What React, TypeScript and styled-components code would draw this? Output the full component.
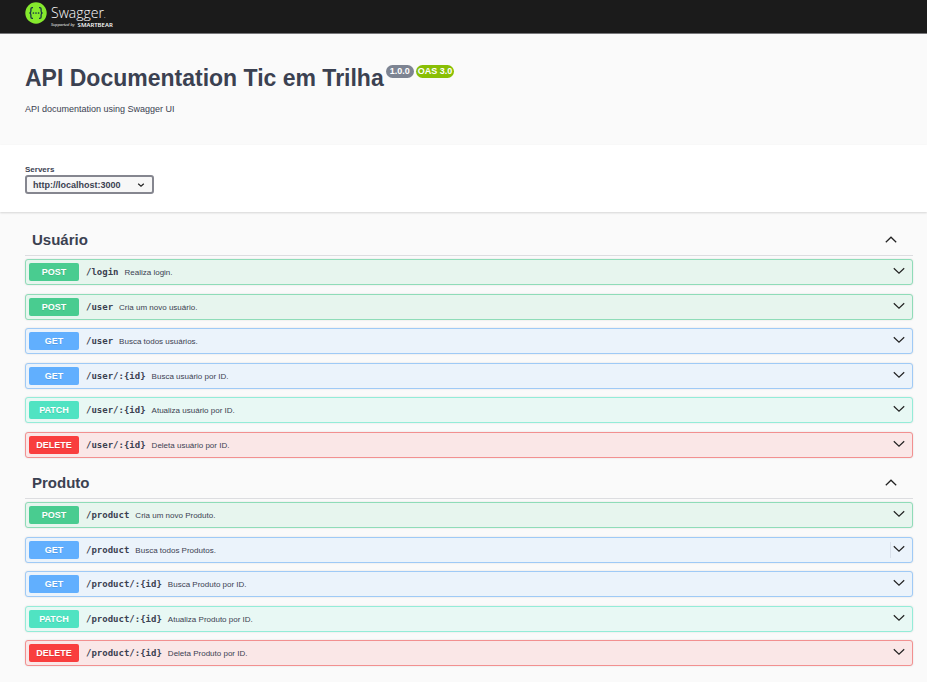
import React, { useState } from "react";
import styled, { createGlobalStyle } from "styled-components";

const GlobalStyle = createGlobalStyle`
  *, *::before, *::after { box-sizing: border-box; }
  body {
    margin: 0;
    background: #fafafa;
    color: #3b4151;
    font-family: "Liberation Sans", Arial, sans-serif;
  }
`;

type Method = "POST" | "GET" | "PATCH" | "DELETE";

interface Operation {
  method: Method;
  path: string;
  summary: string;
  focused?: boolean;
}

interface Tag {
  name: string;
  operations: Operation[];
}

const palette: Record<Method, { solid: string; border: string; tint: string }> = {
  POST: { solid: "#49cc90", border: "#8fdcb8", tint: "#e7f5ee" },
  GET: { solid: "#61affe", border: "#9fcaf6", tint: "#ebf3fb" },
  PATCH: { solid: "#50e3c2", border: "#94ecd8", tint: "#e8f8f4" },
  DELETE: { solid: "#f93e3e", border: "#f29090", tint: "#fae7e7" },
};

const tags: Tag[] = [
  {
    name: "Usuário",
    operations: [
      { method: "POST", path: "/login", summary: "Realiza login." },
      { method: "POST", path: "/user", summary: "Cria um novo usuário." },
      { method: "GET", path: "/user", summary: "Busca todos usuários." },
      { method: "GET", path: "/user/:{id}", summary: "Busca usuário por ID." },
      { method: "PATCH", path: "/user/:{id}", summary: "Atualiza usuário por ID." },
      { method: "DELETE", path: "/user/:{id}", summary: "Deleta usuário por ID." },
    ],
  },
  {
    name: "Produto",
    operations: [
      { method: "POST", path: "/product", summary: "Cria um novo Produto." },
      { method: "GET", path: "/product", summary: "Busca todos Produtos.", focused: true },
      { method: "GET", path: "/product/:{id}", summary: "Busca Produto por ID." },
      { method: "PATCH", path: "/product/:{id}", summary: "Atualiza Produto por ID." },
      { method: "DELETE", path: "/product/:{id}", summary: "Deleta Produto por ID." },
    ],
  },
];

const Topbar = styled.header`
  display: flex;
  padding: 2px 25px 5px;
  background: #1b1b1b;
  border-bottom: 1px solid #77777a;
`;

const Brand = styled.a`
  display: flex;
  gap: 4px;
  color: #fff;
  text-decoration: none;
`;

const BrandText = styled.span`
  display: flex;
  flex-direction: column;
  padding-top: 2px;
`;

const BrandName = styled.span`
  font: 300 14px/18px "Open Sans", "Noto Sans", sans-serif;

  small { font-size: 8px; line-height: 1; }
`;

const BrandOwner = styled.span`
  display: flex;
  align-items: center;
  gap: 3px;
  height: 6px;
  font: 4px/6px "Open Sans", "Noto Sans", sans-serif;
  white-space: nowrap;

  b { font-size: 6px; font-weight: 600; }
`;

const Info = styled.section`
  padding: 30px 25px;
`;

const TitleRow = styled.div`
  display: flex;
  align-items: flex-start;
  gap: 2px;
`;

const Title = styled.h1`
  margin: 0;
  font-size: 23px;
  line-height: 28px;
`;

const Version = styled.span<{ $color: string; $tight?: boolean }>`
  margin-top: 1px;
  padding: 0 ${(p) => (p.$tight ? 2 : 4)}px;
  border-radius: 7px;
  background: ${(p) => p.$color};
  color: #fff;
  font-size: 9px;
  font-weight: 700;
  line-height: 13px;
`;

const Description = styled.p`
  margin: 11px 0 0;
  font-size: 9px;
  line-height: 12px;
`;

const Schemes = styled.section`
  display: flex;
  flex-direction: column;
  align-items: flex-start;
  padding: 20px 25px 18px;
  background: #fff;
  box-shadow: 0 1px 2px rgba(0, 0, 0, 0.15);
`;

const ServersLabel = styled.label`
  font-size: 8px;
  font-weight: 700;
  line-height: 10px;
`;

const SelectBox = styled.div`
  display: grid;
  align-items: center;
  width: 129px;

  > * { grid-area: 1 / 1; }
  svg { justify-self: end; margin-right: 9px; pointer-events: none; }
`;

const Select = styled.select`
  appearance: none;
  width: 100%;
  height: 19px;
  padding: 0 24px 0 6px;
  border: 2px solid #85868f;
  border-radius: 3px;
  background: #f7f7f7;
  color: #3b4151;
  font: 700 9px/12px "Liberation Sans", Arial, sans-serif;
`;

const Main = styled.main`
  padding: 13px 14px 16px 25px;
`;

const TagSection = styled.section`
  & + & { margin-top: 10px; }
`;

const TagTitle = styled.h2`
  margin: 0 0 3px;
  border-bottom: 1px solid #dcdde0;
`;

const TagToggle = styled.button`
  display: flex;
  align-items: center;
  justify-content: space-between;
  width: 100%;
  height: 30px;
  padding: 0 16px 0 7px;
  border: 0;
  background: none;
  color: inherit;
  font: 700 15px/20px "Liberation Sans", Arial, sans-serif;
  text-align: left;
  cursor: pointer;
`;

const Operations = styled.ul`
  margin: 0;
  padding: 0;
  list-style: none;
`;

const OperationItem = styled.li`
  margin-bottom: 9px;

  &:nth-child(even) { margin-bottom: 8px; }
  &:last-child { margin-bottom: 0; }
`;

const OperationButton = styled.button<{ $method: Method }>`
  display: flex;
  align-items: center;
  width: 100%;
  height: 26px;
  padding: 0 7px 0 3px;
  border: 1px solid ${(p) => palette[p.$method].border};
  border-radius: 3px;
  background: ${(p) => palette[p.$method].tint};
  box-shadow: 0 0 2px rgba(0, 0, 0, 0.12);
  color: #3b4151;
  font-family: inherit;
  text-align: left;
  cursor: pointer;
`;

const MethodBadge = styled.span<{ $method: Method }>`
  width: 50px;
  border-radius: 2px;
  background: ${(p) => palette[p.$method].solid};
  color: #fff;
  font-size: 9px;
  font-weight: 700;
  line-height: 18px;
  text-align: center;
  text-shadow: 0 1px 0 rgba(0, 0, 0, 0.1);
`;

const Path = styled.span`
  margin: 0 6px 0 7px;
  font: 700 9px/12px "DejaVu Sans Mono", monospace;
`;

const Summary = styled.span`
  flex: 1;
  padding-top: 1px;
  font-size: 8px;
  line-height: 11px;
`;

const ArrowSlot = styled.span<{ $divided?: boolean }>`
  display: flex;
  height: 16px;
  padding: 1px 0 0 2px;
  border-left: 1px solid ${(p) => (p.$divided ? "#d8e0ea" : "transparent")};
`;

function Chevron({ up = false }: { up?: boolean }) {
  return (
    <svg width="12" height="12" viewBox="0 0 12 12" fill="none" stroke="#222" strokeWidth="1.2" aria-hidden="true">
      <path d={up ? "M0.8 8.2 6 3.2l5.2 5" : "M0.8 3.2 6 8.2l5.2-5"} />
    </svg>
  );
}

function SwaggerMark() {
  return (
    <svg width="22" height="22" viewBox="0 0 22 22" aria-hidden="true">
      <circle cx="11" cy="11" r="10.7" fill="#85ea2d" />
      <g fill="none" stroke="#173647" strokeWidth="1.3">
        <path d="M8 5.6H7.2Q5.9 5.6 5.9 7v2q0 2-1.5 2 1.5 0 1.5 2v2q0 1.4 1.3 1.4H8" />
        <path d="M14 5.6h.8q1.3 0 1.3 1.4v2q0 2 1.5 2-1.5 0-1.5 2v2q0 1.4-1.3 1.4H14" />
      </g>
      <g fill="#173647">
        <circle cx="8.4" cy="11" r=".85" />
        <circle cx="11" cy="11" r=".85" />
        <circle cx="13.6" cy="11" r=".85" />
      </g>
    </svg>
  );
}

function TagGroup({ tag }: { tag: Tag }) {
  const [open, setOpen] = useState(true);
  return (
    <TagSection>
      <TagTitle>
        <TagToggle type="button" aria-expanded={open} onClick={() => setOpen(!open)}>
          {tag.name}
          <Chevron up={open} />
        </TagToggle>
      </TagTitle>
      {open && (
        <Operations>
          {tag.operations.map((op) => (
            <OperationItem key={op.method + op.path}>
              <OperationButton type="button" $method={op.method}>
                <MethodBadge $method={op.method}>{op.method}</MethodBadge>
                <Path>{op.path}</Path>
                <Summary>{op.summary}</Summary>
                <ArrowSlot $divided={op.focused}>
                  <Chevron />
                </ArrowSlot>
              </OperationButton>
            </OperationItem>
          ))}
        </Operations>
      )}
    </TagSection>
  );
}

export default function App() {
  return (
    <>
      <GlobalStyle />
      <Topbar>
        <Brand href="#">
          <SwaggerMark />
          <BrandText>
            <BrandName>
              Swagger<small>.</small>
            </BrandName>
            <BrandOwner>
              <i>Supported by</i>
              <b>SMARTBEAR</b>
            </BrandOwner>
          </BrandText>
        </Brand>
      </Topbar>
      <Info>
        <TitleRow>
          <Title>API Documentation Tic em Trilha</Title>
          <Version $color="#7d8492">1.0.0</Version>
          <Version $color="#89bf04" $tight>OAS 3.0</Version>
        </TitleRow>
        <Description>API documentation using Swagger UI</Description>
      </Info>
      <Schemes>
        <ServersLabel htmlFor="servers">Servers</ServersLabel>
        <SelectBox>
          <Select id="servers">
            <option>http://localhost:3000</option>
          </Select>
          <svg width="8" height="8" viewBox="0 0 8 8" fill="none" stroke="#222" strokeWidth="1.2" aria-hidden="true">
            <path d="M1.2 2.7 4 5.2l2.8-2.5" />
          </svg>
        </SelectBox>
      </Schemes>
      <Main>
        {tags.map((tag) => (
          <TagGroup key={tag.name} tag={tag} />
        ))}
      </Main>
    </>
  );
}
